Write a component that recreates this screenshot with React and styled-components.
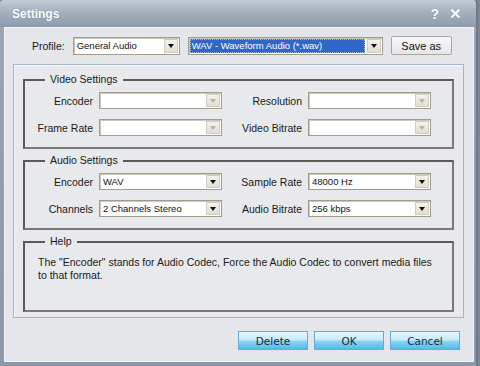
import React from "react";
import styled, { createGlobalStyle } from "styled-components";

const Global = createGlobalStyle`
  html, body { margin: 0; padding: 0; background: #7d8796; }
  body { font-family: "Liberation Sans", Arial, sans-serif; }
`;

const Window = styled.div`
  width: 478px;
  height: 366px;
  display: flex;
  flex-direction: column;
  background: linear-gradient(#9aa6b5, #8c98a9);
  box-sizing: border-box;
  border-right: 2px solid #6f7886;
  border-radius: 4px 4px 0 0;
`;

const TitleBar = styled.div`
  height: 27px;
  display: flex;
  align-items: center;
  padding: 0 14px 0 12px;
  background: linear-gradient(#c3cbd5 0%, #a7b2c0 40%, #8f9cad 100%);
  border-radius: 4px 4px 0 0;
  color: #fff;
  font-weight: bold;
  font-size: 12px;
  text-shadow: 0 0 1px #6a7586;
`;

const Title = styled.span`
  flex: 1;
`;

const TitleIcon = styled.span`
  font-size: ${p => p.size || 14}px;
  margin-left: 10px;
  line-height: 1;
`;

const Body = styled.div`
  flex: 1;
  margin: 0 2px 4px 4px;
  background: #e4e6ea;
  border: 1px solid #f3f4f6;
  display: flex;
  flex-direction: column;
`;

const ProfileRow = styled.div`
  display: flex;
  align-items: center;
  padding: 8px 0 0 27px;
  gap: 8px;
  color: #111;
`;

const Label = styled.span`
  font-size: 10.5px;
  color: #1a1a1a;
  text-align: ${p => p.align || "right"};
`;

const SelectBox = styled.div`
  width: ${p => p.w}px;
  height: ${p => p.h || 17}px;
  box-sizing: border-box;
  background: #fff;
  border: 1px solid #a19d8c;
  box-shadow: inset 1px 1px 0 #cdc9ba;
  display: flex;
  align-items: stretch;
  padding: 1px;
`;

const SelectText = styled.div`
  flex: 1;
  display: flex;
  align-items: center;
  font-size: 9.5px;
  color: ${p => (p.hl ? "#fff" : "#111")};
  background: ${p => (p.hl ? "#2f66c8" : "transparent")};
  outline: ${p => (p.hl ? "1px dotted #9bb8e8" : "none")};
  outline-offset: -1px;
  padding-left: 2px;
  margin-right: 2px;
  white-space: nowrap;
  overflow: hidden;
`;

const Arrow = styled.div`
  width: 14px;
  box-sizing: border-box;
  background: linear-gradient(#f4f2ea, #e1ded2);
  border: 1px solid #cfccc0;
  display: flex;
  align-items: center;
  justify-content: center;
`;

const Tri = styled.span`
  width: 0;
  height: 0;
  border-left: 3px solid transparent;
  border-right: 3px solid transparent;
  border-top: 4px solid ${p => (p.off ? "#b5b2a8" : "#111")};
`;

const Select = ({ w, h, value, hl, off }) => (
  <SelectBox w={w} h={h}>
    <SelectText hl={hl}>{value}</SelectText>
    <Arrow>
      <Tri off={off} />
    </Arrow>
  </SelectBox>
);

const SaveButton = styled.button`
  width: 61px;
  height: 19px;
  padding: 0;
  font-family: inherit;
  font-size: 11px;
  color: #111;
  background: linear-gradient(#f8f8f8, #e6e6e6);
  border: 1px solid #a7a7a7;
  border-radius: 2px;
`;

const Panel = styled.div`
  margin: 9px 9px 0 8px;
  height: 254px;
  box-sizing: border-box;
  border: 1px solid #a9b4c3;
  box-shadow: inset 1px 1px 0 #f6f7f9;
  background: #e7e9ec;
  padding: 8px 9px 0 9px;
  display: flex;
  flex-direction: column;
  gap: 5px;
`;

const Group = styled.fieldset`
  margin: 0;
  padding: ${p => p.pad || "6px 0 12px 6px"};
  min-width: 0;
  border: 2px solid #6c6c6c;
  border-color: #5a5a5a #7a7a7a #7a7a7a #5a5a5a;
  height: ${p => p.h}px;
  box-sizing: border-box;
`;

const Legend = styled.legend`
  font-size: 10.5px;
  line-height: 13px;
  color: #1a1a1a;
  margin-left: 14px;
  padding: 0 5px;
`;

const Grid = styled.div`
  display: grid;
  grid-template-columns: 62px 123px 74px 123px;
  column-gap: 6px;
  row-gap: 10px;
  align-items: center;
`;

const HelpText = styled.p`
  margin: 0;
  padding: 2px 18px 0 7px;
  font-size: 10.5px;
  line-height: 13px;
  color: #1a1a1a;
`;

const ButtonRow = styled.div`
  display: flex;
  justify-content: flex-end;
  gap: 6px;
  padding: 13px 13px 0 0;
`;

const DialogButton = styled.button`
  width: 70px;
  height: 19px;
  padding: 0;
  font-family: "DejaVu Sans", Verdana, sans-serif;
  font-size: 10.5px;
  color: #1b2a35;
  border: 1px solid #62add6;
  background: linear-gradient(
    #e4f5fd 0%,
    #c6eafa 48%,
    #8fd5f3 52%,
    #4ebde9 100%
  );
`;

const video = [
  ["Encoder", "", "Resolution", ""],
  ["Frame Rate", "", "Video Bitrate", ""],
];

const audio = [
  ["Encoder", "WAV", "Sample Rate", "48000 Hz"],
  ["Channels", "2 Channels Stereo", "Audio Bitrate", "256 kbps"],
];

function Rows({ rows, off }) {
  return (
    <Grid>
      {rows.map(r => (
        <React.Fragment key={r[0]}>
          <Label>{r[0]}</Label>
          <Select w={123} value={r[1]} off={off} />
          <Label>{r[2]}</Label>
          <Select w={123} value={r[3]} off={off} />
        </React.Fragment>
      ))}
    </Grid>
  );
}

export default function App() {
  return (
    <>
      <Global />
      <Window>
        <TitleBar>
          <Title>Settings</Title>
          <TitleIcon size={14}>?</TitleIcon>
          <TitleIcon size={15}>✕</TitleIcon>
        </TitleBar>
        <Body>
          <ProfileRow>
            <Label>Profile:</Label>
            <Select w={107} h={18} value="General Audio" />
            <Select w={195} h={18} value="WAV - Waveform Audio (*.wav)" hl />
            <SaveButton>Save as</SaveButton>
          </ProfileRow>
          <Panel>
            <Group h={76}>
              <Legend>Video Settings</Legend>
              <Rows rows={video} off />
            </Group>
            <Group h={76}>
              <Legend>Audio Settings</Legend>
              <Rows rows={audio} />
            </Group>
            <Group h={77} pad="6px 0 0 6px">
              <Legend>Help</Legend>
              <HelpText>
                The "Encoder" stands for Audio Codec, Force the Audio Codec to
                convert media files to that format.
              </HelpText>
            </Group>
          </Panel>
          <ButtonRow>
            <DialogButton>Delete</DialogButton>
            <DialogButton>OK</DialogButton>
            <DialogButton>Cancel</DialogButton>
          </ButtonRow>
        </Body>
      </Window>
    </>
  );
}
